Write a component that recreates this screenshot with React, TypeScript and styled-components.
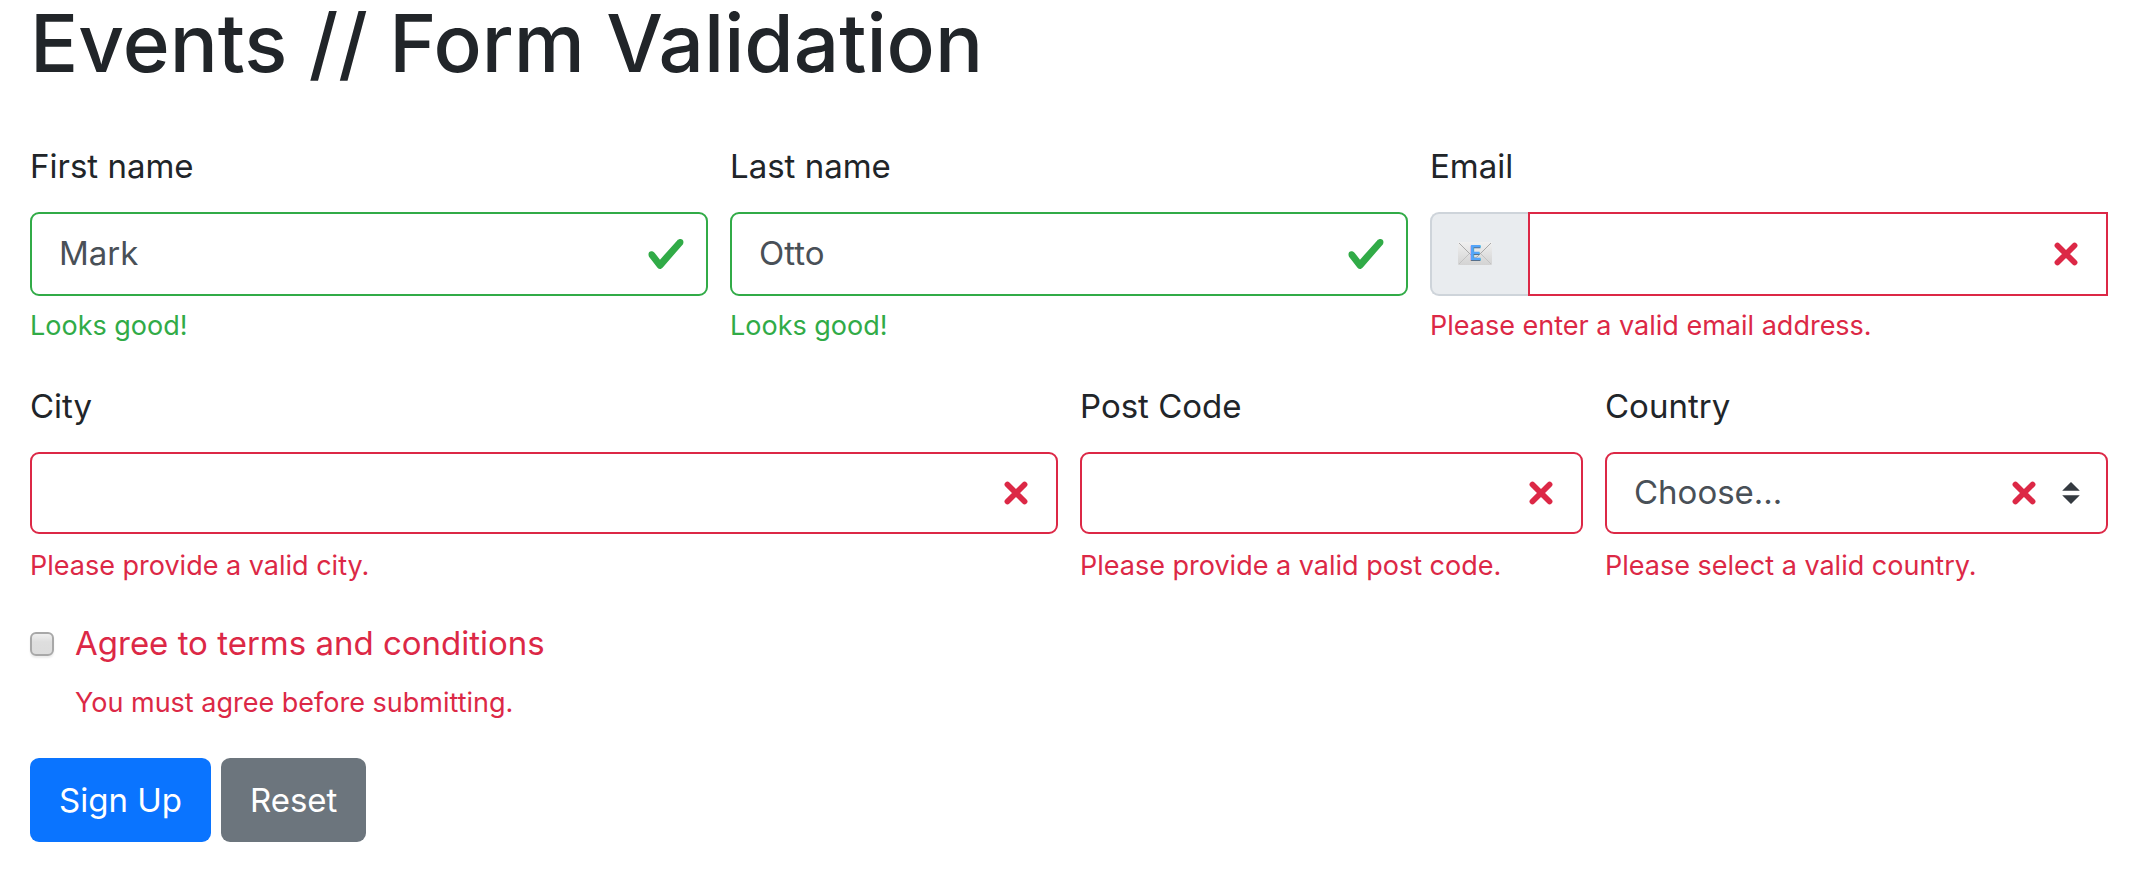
import React from "react";
import styled, { createGlobalStyle } from "styled-components";

type Status = "valid" | "invalid";

const colors = { valid: "#31ab47", invalid: "#dc2846" };

const GlobalStyle = createGlobalStyle`
  *, *::before, *::after { box-sizing: border-box; }
  body {
    margin: 0;
    background: #fff;
    color: #212529;
    font-family: Inter, "Liberation Sans", sans-serif;
    font-size: 33px;
    line-height: 51px;
  }
`;

const Page = styled.main`
  padding: 0 30px 50px;
`;

const Title = styled.h1`
  margin: 0 0 56px;
  font-size: 80px;
  font-weight: 500;
  line-height: 85px;
`;

const Row = styled.div`
  display: grid;
  grid-template-columns: repeat(12, minmax(0, 1fr));
  column-gap: 22px;
  margin-bottom: 34px;
`;

const Column = styled.div<{ $span: number }>`
  grid-column: span ${(p) => p.$span};
`;

const Label = styled.label`
  display: block;
  margin-bottom: 20px;
`;

const Control = styled.div`
  position: relative;
  display: flex;
  align-items: flex-start;
  min-height: 84px;
`;

const Input = styled.input<{ $status: Status; $compact?: boolean; $grouped?: boolean }>`
  flex: 1;
  min-width: 0;
  height: ${(p) => (p.$compact ? 82 : 84)}px;
  margin: 0;
  padding: 0 80px 2px 27px;
  border: 2px solid ${(p) => colors[p.$status]};
  border-radius: ${(p) => (p.$grouped ? 0 : 9)}px;
  background: #fff;
  color: #495057;
  font: inherit;
  outline: 0;
`;

const Select = styled.select`
  flex: 1;
  min-width: 0;
  height: 82px;
  margin: 0;
  padding: 0 120px 2px 27px;
  border: 2px solid ${colors.invalid};
  border-radius: 9px;
  background: #fff;
  color: #495057;
  font: inherit;
  appearance: none;
  outline: 0;
`;

const Indicators = styled.span<{ $compact?: boolean; $select?: boolean }>`
  position: absolute;
  top: 0;
  right: ${(p) => (p.$select ? 28 : 22)}px;
  height: ${(p) => (p.$compact ? 82 : 84)}px;
  display: flex;
  align-items: center;
  gap: 18px;
  pointer-events: none;
`;

const Addon = styled.span`
  display: flex;
  align-items: center;
  justify-content: center;
  width: 98px;
  height: 84px;
  padding: 0 10px 2px 0;
  border: 2px solid #ced4da;
  border-right: 0;
  border-radius: 9px 0 0 9px;
  background: #e9ecef;
`;

const Feedback = styled.div<{ $status: Status }>`
  margin-top: 9px;
  color: ${(p) => colors[p.$status]};
  font-size: 27px;
  line-height: 42px;
`;

const Terms = styled.div`
  display: grid;
  grid-template-columns: 24px 1fr;
  gap: 4px 21px;
  align-items: center;
  margin: -3px 0 34px;
  color: ${colors.invalid};
`;

const Checkbox = styled.input`
  width: 24px;
  height: 24px;
  margin: 0;
  border: 2px solid #a8a8a8;
  border-radius: 6px;
  background: linear-gradient(#efefef, #dedede 40%, #dcdcdc);
  box-shadow: 0 2px 2px #ececec;
  appearance: none;
`;

const TermsFeedback = styled(Feedback)`
  grid-column: 2;
`;

const Actions = styled.div`
  display: flex;
  gap: 10px;
`;

const Button = styled.button<{ $tone: "primary" | "secondary" }>`
  height: 84px;
  padding: 0 29px;
  border: 0;
  border-radius: 9px;
  background: ${(p) => (p.$tone === "primary" ? "#0a74ff" : "#6c757d")};
  color: #fff;
  font: inherit;
`;

const CheckIcon = () => (
  <svg width="40" height="40" viewBox="0 0 8 8" fill={colors.valid} aria-hidden="true">
    <path d="M2.3 6.73L.6 4.53c-.4-1.04.46-1.4 1.1-.8l1.1 1.4 3.4-3.8c.6-.63 1.6-.27 1.2.7l-4 4.6c-.43.5-.8.4-1.1.1z" />
  </svg>
);

const CrossIcon = () => (
  <svg width="40" height="40" viewBox="-2 -2 7 7" stroke={colors.invalid} strokeLinecap="round" aria-hidden="true">
    <path d="M0 0l3 3m0-3L0 3" />
  </svg>
);

const ArrowsIcon = () => (
  <svg width="18" height="22" viewBox="0 0 4 5" fill="#343a40" aria-hidden="true">
    <path d="M2 0L0 2h4zm0 5L0 3h4z" />
  </svg>
);

const EnvelopeIcon = () => (
  <svg width="34" height="23" viewBox="0 0 34 23" role="img" aria-label="E-mail">
    <defs>
      <linearGradient id="paper" x1="0" y1="0" x2="0" y2="1">
        <stop offset="0" stopColor="#f0f0f0" />
        <stop offset="1" stopColor="#d3d3d3" />
      </linearGradient>
    </defs>
    <rect width="34" height="23" rx="1" fill="url(#paper)" />
    <path d="M1 22L12 11M33 22L22 11" stroke="#c2c2c2" fill="none" />
    <path d="M1 1L15 15Q17 17 19 15L33 1" stroke="#a9a9a9" fill="none" />
    <text x="17" y="19" textAnchor="middle" fontFamily="Roboto, sans-serif" fontWeight="700" fontSize="20" fill="#55708c">E</text>
    <text x="17" y="18" textAnchor="middle" fontFamily="Roboto, sans-serif" fontWeight="700" fontSize="20" fill="#55a5fa">E</text>
  </svg>
);

interface FieldProps {
  id: string;
  label: string;
  span: number;
  status: Status;
  message: string;
  children: React.ReactNode;
}

const Field = ({ id, label, span, status, message, children }: FieldProps) => (
  <Column $span={span}>
    <Label htmlFor={id}>{label}</Label>
    <Control>{children}</Control>
    <Feedback $status={status}>{message}</Feedback>
  </Column>
);

export default function App() {
  return (
    <Page>
      <GlobalStyle />
      <Title>Events // Form Validation</Title>
      <form noValidate onSubmit={(e) => e.preventDefault()}>
        <Row>
          <Field id="first" label="First name" span={4} status="valid" message="Looks good!">
            <Input id="first" type="text" defaultValue="Mark" $status="valid" />
            <Indicators><CheckIcon /></Indicators>
          </Field>
          <Field id="last" label="Last name" span={4} status="valid" message="Looks good!">
            <Input id="last" type="text" defaultValue="Otto" $status="valid" />
            <Indicators><CheckIcon /></Indicators>
          </Field>
          <Field id="email" label="Email" span={4} status="invalid" message="Please enter a valid email address.">
            <Addon><EnvelopeIcon /></Addon>
            <Input id="email" type="email" $status="invalid" $grouped />
            <Indicators><CrossIcon /></Indicators>
          </Field>
        </Row>
        <Row>
          <Field id="city" label="City" span={6} status="invalid" message="Please provide a valid city.">
            <Input id="city" type="text" $status="invalid" $compact />
            <Indicators $compact><CrossIcon /></Indicators>
          </Field>
          <Field id="postcode" label="Post Code" span={3} status="invalid" message="Please provide a valid post code.">
            <Input id="postcode" type="text" $status="invalid" $compact />
            <Indicators $compact><CrossIcon /></Indicators>
          </Field>
          <Field id="country" label="Country" span={3} status="invalid" message="Please select a valid country.">
            <Select id="country" defaultValue="">
              <option value="">Choose...</option>
            </Select>
            <Indicators $compact $select><CrossIcon /><ArrowsIcon /></Indicators>
          </Field>
        </Row>
        <Terms>
          <Checkbox id="terms" type="checkbox" />
          <label htmlFor="terms">Agree to terms and conditions</label>
          <TermsFeedback $status="invalid">You must agree before submitting.</TermsFeedback>
        </Terms>
        <Actions>
          <Button type="submit" $tone="primary">Sign Up</Button>
          <Button type="reset" $tone="secondary">Reset</Button>
        </Actions>
      </form>
    </Page>
  );
}
